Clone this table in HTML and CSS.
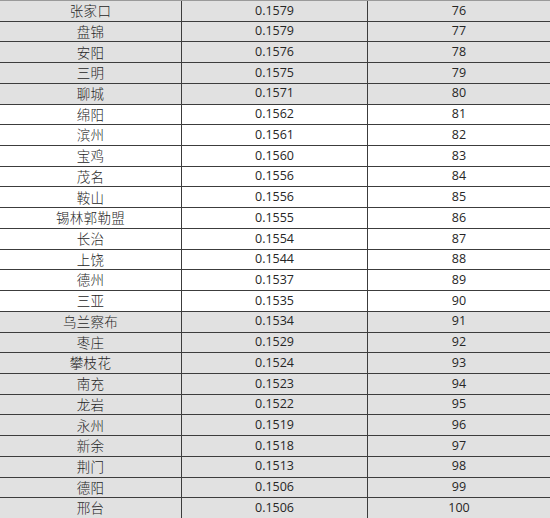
FILE: index.html
```
<!DOCTYPE html>
<html lang="zh">
<head>
<meta charset="utf-8">
<link rel="stylesheet" href="styles.css">
</head>
<body>
<div class="table">
  <div class="row gray"><div class="cell name">张家口</div><div class="cell num">0.1579</div><div class="cell num">76</div></div>
  <div class="row gray"><div class="cell name">盘锦</div><div class="cell num">0.1579</div><div class="cell num">77</div></div>
  <div class="row gray"><div class="cell name">安阳</div><div class="cell num">0.1576</div><div class="cell num">78</div></div>
  <div class="row gray"><div class="cell name">三明</div><div class="cell num">0.1575</div><div class="cell num">79</div></div>
  <div class="row gray"><div class="cell name">聊城</div><div class="cell num">0.1571</div><div class="cell num">80</div></div>
  <div class="row"><div class="cell name">绵阳</div><div class="cell num">0.1562</div><div class="cell num">81</div></div>
  <div class="row"><div class="cell name">滨州</div><div class="cell num">0.1561</div><div class="cell num">82</div></div>
  <div class="row"><div class="cell name">宝鸡</div><div class="cell num">0.1560</div><div class="cell num">83</div></div>
  <div class="row"><div class="cell name">茂名</div><div class="cell num">0.1556</div><div class="cell num">84</div></div>
  <div class="row"><div class="cell name">鞍山</div><div class="cell num">0.1556</div><div class="cell num">85</div></div>
  <div class="row"><div class="cell name">锡林郭勒盟</div><div class="cell num">0.1555</div><div class="cell num">86</div></div>
  <div class="row"><div class="cell name">长治</div><div class="cell num">0.1554</div><div class="cell num">87</div></div>
  <div class="row"><div class="cell name">上饶</div><div class="cell num">0.1544</div><div class="cell num">88</div></div>
  <div class="row"><div class="cell name">德州</div><div class="cell num">0.1537</div><div class="cell num">89</div></div>
  <div class="row"><div class="cell name">三亚</div><div class="cell num">0.1535</div><div class="cell num">90</div></div>
  <div class="row gray"><div class="cell name">乌兰察布</div><div class="cell num">0.1534</div><div class="cell num">91</div></div>
  <div class="row gray"><div class="cell name">枣庄</div><div class="cell num">0.1529</div><div class="cell num">92</div></div>
  <div class="row gray"><div class="cell name">攀枝花</div><div class="cell num">0.1524</div><div class="cell num">93</div></div>
  <div class="row gray"><div class="cell name">南充</div><div class="cell num">0.1523</div><div class="cell num">94</div></div>
  <div class="row gray"><div class="cell name">龙岩</div><div class="cell num">0.1522</div><div class="cell num">95</div></div>
  <div class="row gray"><div class="cell name">永州</div><div class="cell num">0.1519</div><div class="cell num">96</div></div>
  <div class="row gray"><div class="cell name">新余</div><div class="cell num">0.1518</div><div class="cell num">97</div></div>
  <div class="row gray"><div class="cell name">荆门</div><div class="cell num">0.1513</div><div class="cell num">98</div></div>
  <div class="row gray"><div class="cell name">德阳</div><div class="cell num">0.1506</div><div class="cell num">99</div></div>
  <div class="row gray"><div class="cell name">邢台</div><div class="cell num">0.1506</div><div class="cell num">100</div></div>
</div>
</body>
</html>
```
FILE: styles.css
```
html, body {
  margin: 0;
  padding: 0;
  background: #ffffff;
}
.table {
  width: 550px;
  height: 518px;
  display: grid;
  grid-template-rows: repeat(25, 1fr);
  overflow: hidden;
  color: #262626;
}
.row {
  display: grid;
  grid-template-columns: 181px 186px 183px;
  border-top: 1px solid #3c3c3c;
  background: #ffffff;
  min-height: 0;
}
.row:first-child {
  border-top-color: #9a9a9a;
}
.row.gray {
  background: #e1e1e1;
}
.cell {
  display: flex;
  align-items: center;
  justify-content: center;
  min-height: 0;
  line-height: 1;
}
.cell + .cell {
  border-left: 1px solid #3c3c3c;
}
.name {
  font-family: "Noto Sans CJK SC", sans-serif;
  font-size: 13.5px;
  font-weight: 300;
  letter-spacing: 0.3px;
}
.num {
  font-family: "Open Sans", "Liberation Sans", sans-serif;
  font-size: 12.5px;
}
```
